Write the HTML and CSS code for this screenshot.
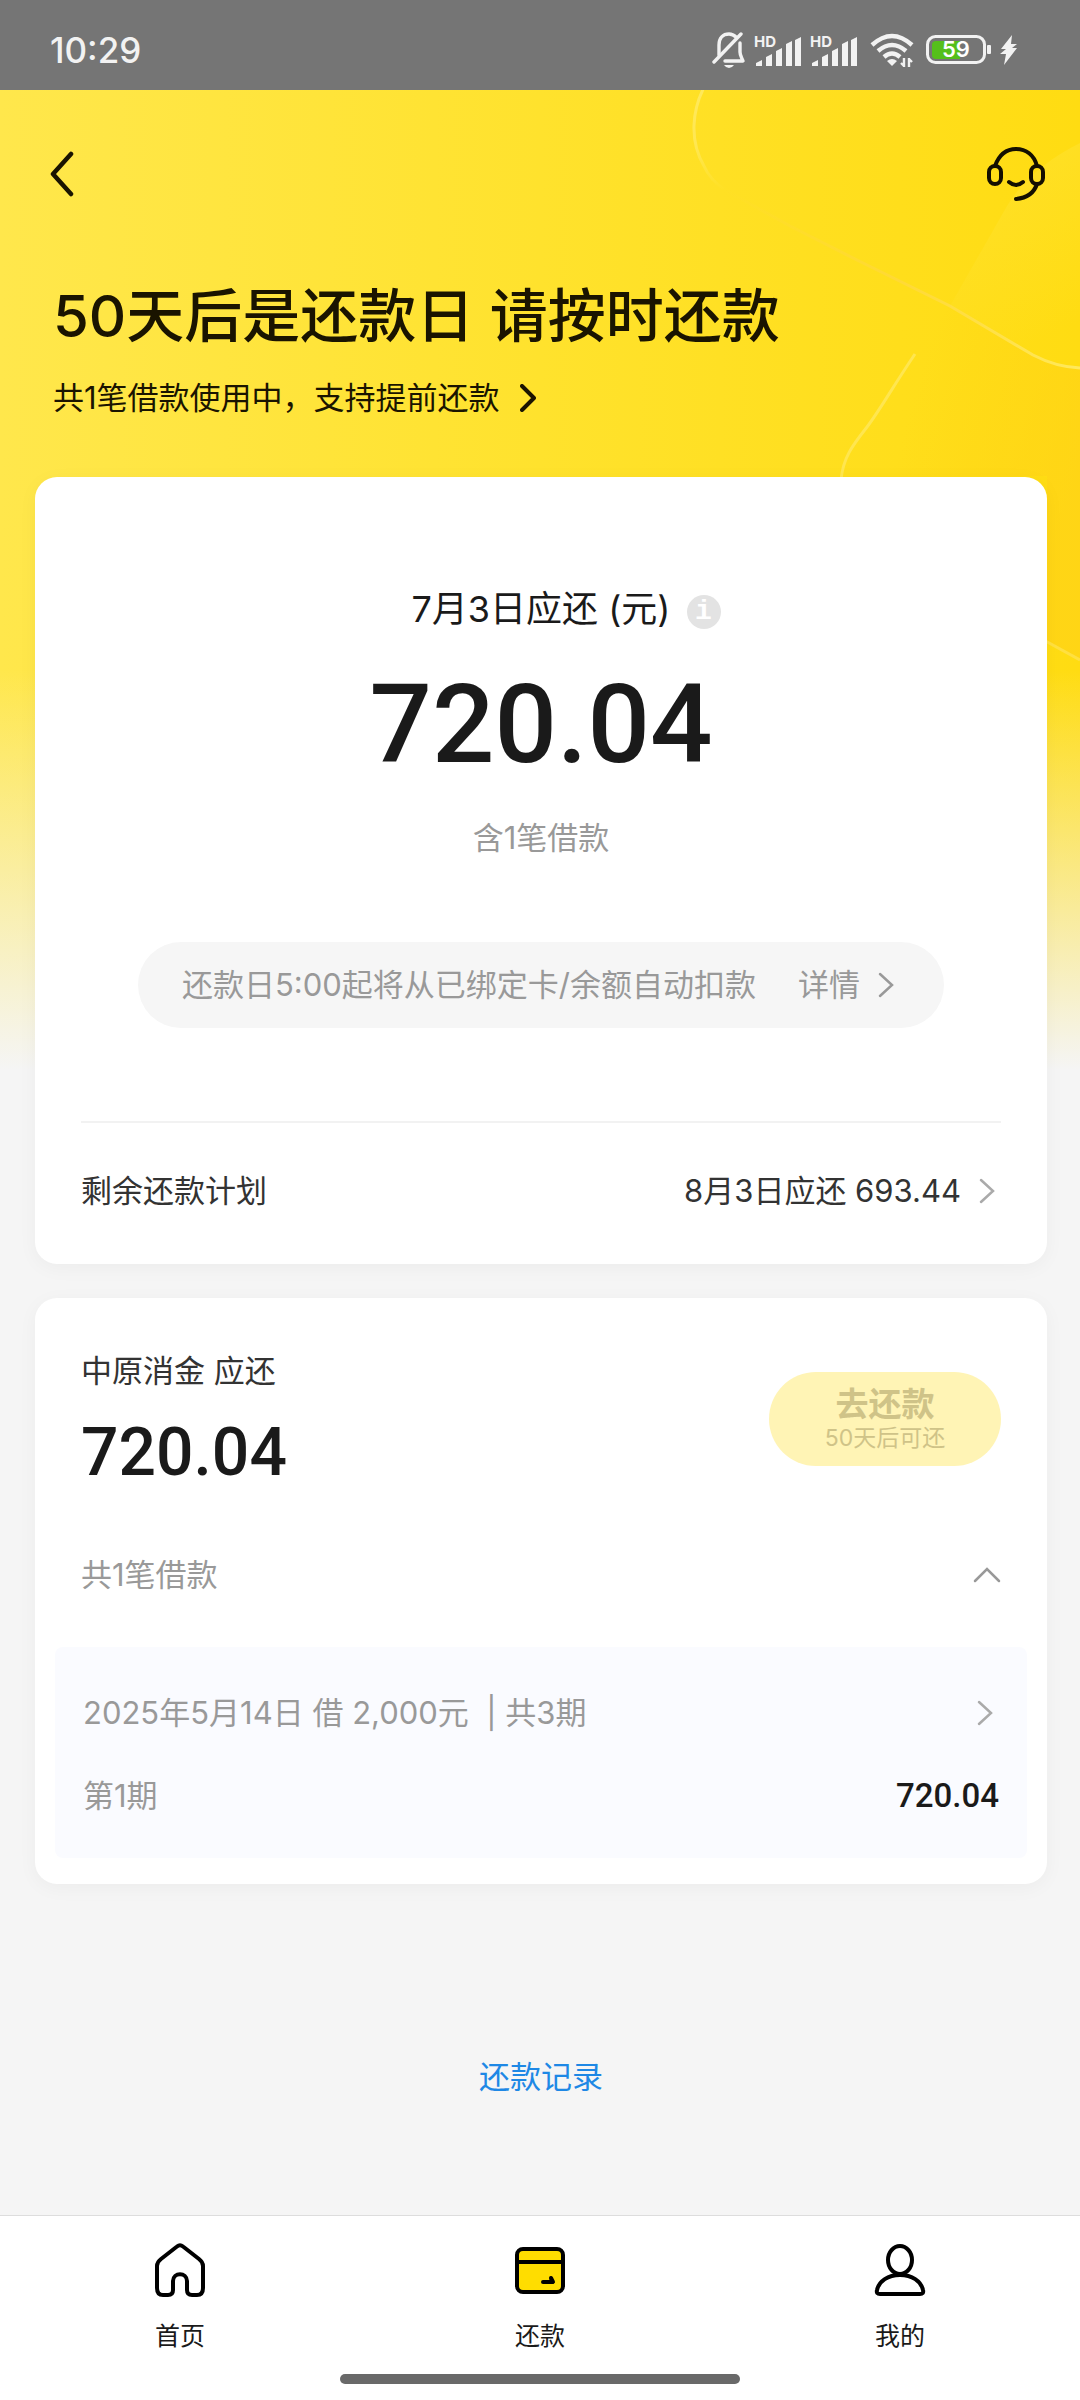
FILE: index.html
```
<!DOCTYPE html>
<html lang="zh-CN">
<head>
  <meta charset="UTF-8">
  <meta name="viewport" content="width=device-width, initial-scale=1">
  <title>还款</title>
  <link rel="stylesheet" href="styles.css">
</head>
<body>

<div class="status-bar">
  <span class="status-time">10:29</span>
  <div class="status-icons">
    <svg class="icon-bell" width="34" height="38" viewBox="0 0 34 38" fill="none" stroke="#f2f2f2" stroke-width="3.4" stroke-linecap="round">
      <path d="M7 24V14C7 7 11 3 17 3C20 3 22 4 24 6"/>
      <path d="M28 12V21C28 25 30 27 31 30H13" stroke-linejoin="round"/>
      <path d="M2 31L29 3"/>
      <path d="M12 34H22Q20 37 17 37Q14 37 12 34Z" fill="#f2f2f2" stroke="none"/>
    </svg>
    <svg class="icon-signal" width="48" height="34" viewBox="0 0 48 34" fill="#f2f2f2">
      <text x="0" y="14" class="hd">HD</text>
      <path d="M2 33V30L8 27V33ZM12 33V24L18 21V33ZM22 33V18L28 15V33ZM32 33V11L38 8V33ZM41 33V7L47 4V33Z"/>
    </svg>
    <svg class="icon-signal" width="48" height="34" viewBox="0 0 48 34" fill="#f2f2f2">
      <text x="0" y="14" class="hd">HD</text>
      <path d="M2 33V30L8 27V33ZM12 33V24L18 21V33ZM22 33V18L28 15V33ZM32 33V11L38 8V33ZM41 33V7L47 4V33Z"/>
    </svg>
    <svg class="icon-wifi" width="44" height="34" viewBox="0 0 44 34" fill="none" stroke="#f2f2f2" stroke-width="4.4">
      <path d="M2 12Q22 -6 42 12"/>
      <path d="M8 18Q22 6 36 18"/>
      <path d="M14 24Q22 17 30 24"/>
      <path d="M17 28Q22 24 27 28L22 33Z" fill="#f2f2f2" stroke="none"/>
      <path d="M34 25V34M39 34V25M31 30L34 33M39 26L42 29" stroke-width="2.4"/>
    </svg>
    <svg class="icon-battery" width="66" height="30" viewBox="0 0 66 30">
      <rect x="1.5" y="1.5" width="57" height="26" rx="8" fill="none" stroke="#f2f2f2" stroke-width="3"/>
      <path d="M10 6H34V24H10Q6 24 6 20V10Q6 6 10 6Z" fill="#55bf1b"/>
      <rect x="61" y="10" width="4" height="9" rx="1" fill="#f2f2f2"/>
      <text x="30" y="22" class="battery-level">59</text>
    </svg>
    <svg class="icon-bolt" width="18" height="30" viewBox="0 0 18 30" fill="#f2f2f2">
      <path d="M12 0L1 14H6L0 19H6L4 30L17 13H12L17 9H11Z"/>
    </svg>
  </div>
</div>

<main class="page">
  <svg class="hero-lines" width="440" height="640" viewBox="0 0 440 640" fill="none">
    <defs>
      <linearGradient id="lineFade" x1="80" y1="110" x2="440" y2="288" gradientUnits="userSpaceOnUse">
        <stop offset="0" stop-color="#ffd83c" stop-opacity="0"/>
        <stop offset="0.5" stop-color="#ffd83c" stop-opacity="0.8"/>
        <stop offset="1" stop-color="#ffe95c"/>
      </linearGradient>
      <linearGradient id="arcFade" x1="0" y1="0" x2="0" y2="110" gradientUnits="userSpaceOnUse">
        <stop offset="0" stop-color="#ffe95c"/>
        <stop offset="0.6" stop-color="#ffe95c" stop-opacity="0.8"/>
        <stop offset="1" stop-color="#ffe95c" stop-opacity="0"/>
      </linearGradient>
      <linearGradient id="orangeFill" x1="270" y1="330" x2="440" y2="380" gradientUnits="userSpaceOnUse">
        <stop offset="0" stop-color="#ffcf18" stop-opacity="0"/>
        <stop offset="1" stop-color="#ffcf18" stop-opacity="0.5"/>
      </linearGradient>
      <linearGradient id="lightFill" x1="350" y1="100" x2="420" y2="250" gradientUnits="userSpaceOnUse">
        <stop offset="0" stop-color="#ffe43c" stop-opacity="0.4"/>
        <stop offset="1" stop-color="#ffe43c" stop-opacity="0"/>
      </linearGradient>
    </defs>
    <path d="M440 63Q390 88 367 126L310 226L393 275Q416 287 440 288Z" fill="url(#lightFill)"/>
    <path d="M310 226L393 275Q416 287 440 288V580L407 563V396H202C202 380 210 370 227 347L267 284Z" fill="url(#orangeFill)"/>
    <path d="M68 0C50 30 50 62 64 86Q70 100 85 110" stroke="url(#arcFade)" stroke-width="3"/>
    <path d="M85 110L150 146L217 180L310 226L393 275Q416 287 440 288" stroke="url(#lineFade)" stroke-width="3"/>
    <path d="M201 400C203 378 212 366 227 347C240 330 252 308 275 274" stroke="#ffe64f" stroke-width="3"/>
    <path d="M400 558L440 580" stroke="#ffe040" stroke-width="3"/>
  </svg>

  <header class="nav-bar">
    <button class="icon-btn" type="button" aria-label="返回">
      <svg width="24" height="46" viewBox="0 0 24 46" fill="none" stroke="#1a1400" stroke-width="4.5" stroke-linecap="round" stroke-linejoin="round">
        <path d="M21 3L3 23L21 43"/>
      </svg>
    </button>
    <button class="icon-btn" type="button" aria-label="客服">
      <svg width="58" height="56" viewBox="0 0 58 56" fill="none" stroke="#140f00" stroke-width="4" stroke-linecap="round">
        <path d="M8 20C12 9 19 3 29 3C39 3 47 9 50 20"/>
        <rect x="2" y="20" width="12" height="18" rx="6"/>
        <rect x="44" y="20" width="12" height="18" rx="6"/>
        <path d="M50 38C47 47 40 52 29 53"/>
        <path d="M22 36Q29 42 36 36"/>
      </svg>
    </button>
  </header>

  <section class="hero">
    <h1 class="hero-title">50天后是还款日 请按时还款</h1>
    <a class="hero-link" href="#loans">共1笔借款使用中，支持提前还款
      <svg width="16" height="28" viewBox="0 0 16 28" fill="none" stroke="#1a1400" stroke-width="4" stroke-linecap="round" stroke-linejoin="round">
        <path d="M2 2L14 14L2 26"/>
      </svg>
    </a>
  </section>

  <section class="card summary">
    <h2 class="summary-label">7月3日应还 (元)
      <button class="info-btn" type="button" aria-label="说明">i</button>
    </h2>
    <p class="amount amount-xl">720.04</p>
    <p class="summary-note">含1笔借款</p>
    <a class="notice" href="#detail">
      <span>还款日5:00起将从已绑定卡/余额自动扣款</span>
      <span class="notice-more">详情
        <svg width="16" height="26" viewBox="0 0 16 26" fill="none" stroke="#999" stroke-width="2.5" stroke-linecap="round">
          <path d="M2 2L14 13L2 24"/>
        </svg>
      </span>
    </a>
    <a class="plan-row" href="#plan">
      <span>剩余还款计划</span>
      <span class="plan-next">8月3日应还 693.44
        <svg width="16" height="26" viewBox="0 0 16 26" fill="none" stroke="#aaa" stroke-width="2.5" stroke-linecap="round">
          <path d="M2 2L14 13L2 24"/>
        </svg>
      </span>
    </a>
  </section>

  <section class="card lender" id="loans">
    <div class="lender-head">
      <div>
        <h2 class="lender-name">中原消金 应还</h2>
        <p class="amount amount-lg">720.04</p>
      </div>
      <button class="pay-btn" type="button" disabled>
        <span class="pay-title">去还款</span>
        <span class="pay-sub">50天后可还</span>
      </button>
    </div>
    <button class="lender-toggle" type="button" aria-expanded="true">
      <span>共1笔借款</span>
      <svg width="28" height="16" viewBox="0 0 28 16" fill="none" stroke="#999" stroke-width="2.5" stroke-linecap="round">
        <path d="M2 14L14 2L26 14"/>
      </svg>
    </button>
    <div class="loan">
      <a class="loan-row" href="#loan">
        <span>2025年5月14日 借 2,000元 &nbsp;| 共3期</span>
        <svg class="loan-arrow" width="16" height="26" viewBox="0 0 16 26" fill="none" stroke="#aaa" stroke-width="2.5" stroke-linecap="round">
          <path d="M2 2L14 13L2 24"/>
        </svg>
      </a>
      <div class="loan-row">
        <span>第1期</span>
        <span class="amount amount-sm">720.04</span>
      </div>
    </div>
  </section>

  <a class="record-link" href="#record">还款记录</a>
</main>

<footer class="tab-bar">
  <nav class="tabs">
    <a class="tab" href="#home">
      <svg width="52" height="54" viewBox="0 0 52 54" fill="none" stroke="#000" stroke-width="4" stroke-linejoin="round">
        <path d="M23 3.500Q26 1 29 3.500L45 16Q49 19 49 23V45Q49 52 43 52H38Q33 52 33 47V38C33 29 19 29 19 38V47Q19 52 14 52H9Q3 52 3 45V23Q3 19 7 16Z"/>
      </svg>
      <span>首页</span>
    </a>
    <a class="tab" href="#repay" aria-current="page">
      <svg width="52" height="54" viewBox="0 0 52 54" fill="none" stroke="#000" stroke-width="4" stroke-linecap="round">
        <rect x="3" y="6" width="46" height="43" rx="6" fill="#fd0"/>
        <path d="M4 19H48"/>
        <path d="M29 39H38L37 35L39 39Z" stroke-linejoin="round"/>
      </svg>
      <span>还款</span>
    </a>
    <a class="tab" href="#mine">
      <svg width="52" height="54" viewBox="0 0 52 54" fill="none" stroke="#000" stroke-width="4" stroke-linejoin="round">
        <ellipse cx="26" cy="17" rx="12" ry="14"/>
        <path d="M26 32C38 32 47 38 49 47Q50 51 46 51H6Q2 51 3 47C5 38 14 32 26 32Z"/>
      </svg>
      <span>我的</span>
    </a>
  </nav>
  <div class="home-indicator"></div>
</footer>

</body>
</html>
```

FILE: styles.css
```
* {
  box-sizing: border-box;
}

body {
  margin: 0;
  min-height: 100vh;
  display: flex;
  flex-direction: column;
  font-family: Inter, "Noto Sans CJK SC", sans-serif;
  font-size: 31px;
  line-height: 44px;
  color: #333;
  background-color: #f5f5f5;
}

h1, h2, p {
  margin: 0;
  font-weight: 400;
}

a {
  color: inherit;
  text-decoration: none;
}

button {
  padding: 0;
  border: none;
  background: none;
  font: inherit;
  color: inherit;
}

svg {
  display: block;
  flex: none;
}

/* status bar */
.status-bar {
  height: 90px;
  padding: 10px 62px 0 50px;
  display: flex;
  align-items: center;
  justify-content: space-between;
  background-color: #757575;
  color: #f2f2f2;
}

.status-time {
  font-size: 35px;
  font-weight: 500;
}

.status-icons {
  display: flex;
  align-items: center;
  gap: 8px;
}

.icon-wifi {
  margin: 0 4px;
}

.hd {
  font-size: 15px;
  font-weight: 700;
}

.battery-level {
  font-size: 22px;
  font-weight: 600;
  text-anchor: middle;
  fill: #fff;
}

/* page */
.page {
  position: relative;
  flex: 1;
  padding: 0 33px 0 35px;
  background-image:
    linear-gradient(to bottom, rgba(245, 245, 245, 0) 580px, #f5f5f5 980px),
    linear-gradient(to right, #ffe74c, #ffe22d 50%, #ffdc12);
}

.hero-lines {
  position: absolute;
  top: 0;
  right: 0;
  margin-top: -10px;
  clip-path: inset(10px 0 0 0);
}

.nav-bar {
  position: relative;
  height: 168px;
  padding: 0 2px 0 15px;
  display: flex;
  align-items: center;
  justify-content: space-between;
}

.hero {
  position: relative;
  padding: 18px 18px 57px;
  color: #1a1400;
}

.hero-title {
  font-size: 58px;
  font-weight: 500;
  line-height: 80px;
}

.hero-link {
  margin-top: 20px;
  display: flex;
  align-items: center;
  gap: 20px;
}

.card {
  position: relative;
  border-radius: 22px;
  background-color: #fff;
  box-shadow: 0 4px 20px rgba(0, 0, 0, 0.04);
}

.amount {
  font-family: Roboto, sans-serif;
  font-weight: 500;
  color: #1a1a1a;
}

.amount-xl {
  font-size: 110px;
  line-height: 120px;
}

.amount-lg {
  font-size: 66px;
  line-height: 72px;
}

.amount-sm {
  font-size: 33px;
}

/* summary card */
.summary {
  padding: 106px 46px 0;
  display: flex;
  flex-direction: column;
  align-items: center;
}

.summary-label {
  position: relative;
  margin-bottom: 30px;
  font-size: 36px;
  line-height: 52px;
  color: #1a1a1a;
}

.info-btn {
  position: absolute;
  top: 12px;
  left: 100%;
  width: 34px;
  height: 34px;
  margin-left: 16px;
  border-radius: 50%;
  background-color: #e3e3e3;
  color: #fff;
  font: bold 28px/34px "Liberation Mono", monospace;
}

.summary-note {
  margin-top: 31px;
  color: #999;
}

.notice {
  height: 86px;
  margin: 82px 0 93px;
  padding: 0 50px 0 44px;
  display: flex;
  align-items: center;
  gap: 42px;
  border-radius: 43px;
  background-color: #f6f6f6;
  color: #999;
}

.notice-more, .plan-next {
  display: flex;
  align-items: center;
  gap: 18px;
}

.plan-row {
  align-self: stretch;
  padding: 46px 6px 51px 0;
  display: flex;
  justify-content: space-between;
  border-top: 2px solid #f2f2f2;
}

/* lender card */
.lender {
  margin-top: 34px;
  padding: 51px 20px 26px;
}

.lender-head {
  padding: 0 26px;
  display: flex;
  align-items: center;
  justify-content: space-between;
}

.lender-name {
  margin-bottom: 24px;
  font-size: 31px;
}

.pay-btn {
  min-width: 232px;
  height: 94px;
  border-radius: 47px;
  background-color: #fff4b5;
  color: #cfc388;
}

.pay-title, .pay-sub {
  display: block;
}

.pay-title {
  font-size: 33px;
  font-weight: 700;
  line-height: 38px;
}

.pay-sub {
  font-size: 23px;
  line-height: 30px;
}

.lender-toggle {
  width: 100%;
  margin: 64px 0 50px;
  padding: 0 26px;
  display: flex;
  align-items: center;
  justify-content: space-between;
  color: #999;
}

.loan {
  padding: 44px 28px 40px;
  display: flex;
  flex-direction: column;
  gap: 39px;
  border-radius: 8px;
  background-color: #fafbff;
  color: #999;
}

.loan-row {
  display: flex;
  align-items: center;
  justify-content: space-between;
}

.loan-arrow {
  margin-right: 6px;
}

.record-link {
  position: relative;
  display: block;
  width: fit-content;
  margin: 171px auto 60px;
  color: #1e88e5;
}

/* tab bar */
.tab-bar {
  padding: 27px 0 16px;
  border-top: 1px solid #ddd;
  background-color: #fff;
  color: #1a1a1a;
}

.tabs {
  display: flex;
}

.tab {
  flex: 1;
  display: flex;
  flex-direction: column;
  align-items: center;
  gap: 21px;
  font-size: 25px;
  line-height: 36px;
}

.home-indicator {
  width: 37%;
  height: 10px;
  margin: 20px auto 0;
  border-radius: 5px;
  background-color: #696969;
}
```
